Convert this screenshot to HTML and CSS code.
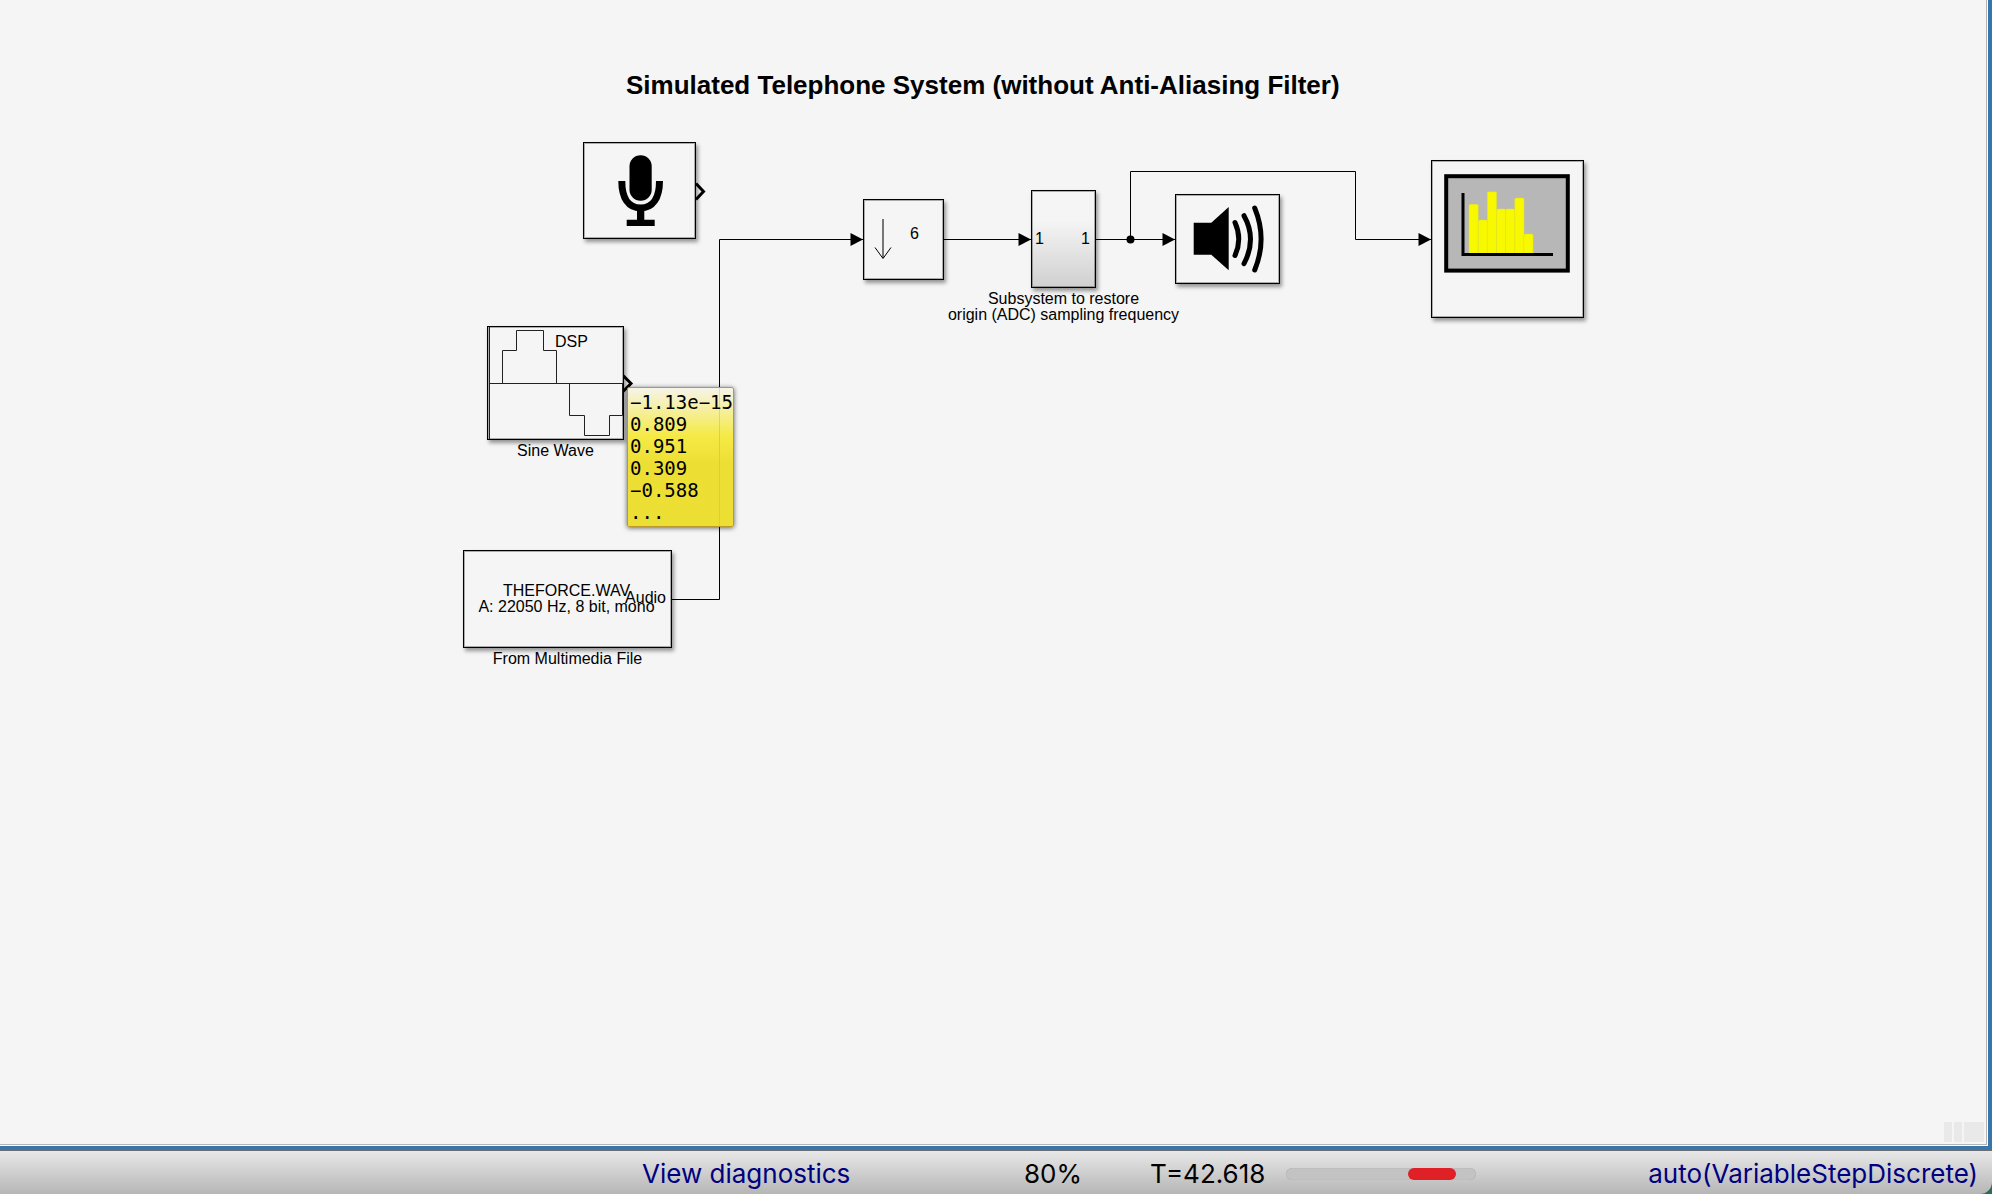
FILE: index.html
```html
<!DOCTYPE html>
<html lang="en">
<head>
<meta charset="utf-8">
<title>Simulated Telephone System</title>
<link rel="stylesheet" href="styles.css">
</head>
<body>
<main class="editor">
  <div class="canvas">
    <h1 class="title">Simulated Telephone System (without Anti-Aliasing Filter)</h1>

    <svg class="wires" width="1600" height="700" aria-hidden="true">
      <g class="wire">
        <path d="M672 599.5H719.5V239.5H864"/>
        <path d="M944 239.5H1032"/>
        <path d="M1096 239.5H1176"/>
        <path d="M1130.500 239V171.500H1355.500V239.500H1432"/>
      </g>
      <g class="arrowhead">
        <path d="M850.500 233V246L863 239.500Z"/>
        <path d="M1018.500 233V246L1031 239.500Z"/>
        <path d="M1162.500 233V246L1175 239.500Z"/>
        <path d="M1418.500 233V246L1431 239.500Z"/>
        <circle cx="1130.500" cy="239.500" r="4"/>
      </g>
      <g class="port">
        <path d="M696 183.500L703.500 191.500L696 199.500"/>
        <path d="M623 375.500L631 383.500L623 391.500"/>
      </g>
    </svg>

    <div class="block mic">
      <svg viewBox="1 1 111 95" role="img" aria-label="Microphone">
        <rect x="46.500" y="13.300" width="22.200" height="45.400" rx="11"/>
        <path class="mic-cradle" d="M38.800 39C38.800 56 45.500 66 57.600 66S76.500 56 76.500 39"/>
        <path d="M54 68h7.300v9.700h10.400V84h-28v-6.300H54z"/>
      </svg>
    </div>

    <div class="block sine">
      <svg class="thin" viewBox="1 1 135 112" aria-hidden="true">
        <path d="M2.500 1V114M2.500 57.500H136"/>
        <path d="M15.500 57.500V24.500H29.500V4.500H56.500V24.500H69.500V57.500H82.500V89.500H97.500V109.500H122.500V89.500H135.500V57.500"/>
      </svg>
      <span class="text dsp">DSP</span>
      <span class="label">Sine Wave</span>
    </div>

    <div class="block file">
      <span class="text file-info">THEFORCE.WAV<br>A: 22050 Hz, 8 bit, mono</span>
      <span class="text audio">Audio</span>
      <span class="label">From Multimedia File</span>
    </div>

    <div class="block downsample">
      <svg class="thin" viewBox="1 1 79 79" aria-hidden="true">
        <path class="stem" d="M20 20V59"/>
        <path class="tip" d="M12 48.500L20 59.500L28 48.500"/>
      </svg>
      <span class="text factor">6</span>
    </div>

    <div class="block subsystem">
      <span class="text in">1</span>
      <span class="text out">1</span>
      <span class="label">Subsystem to restore<br>origin (ADC) sampling frequency</span>
    </div>

    <div class="block speaker">
      <svg viewBox="1 1 103 88" role="img" aria-label="Speaker">
        <path d="M18.700 28.700H36.300L53.700 13V76.300L36.300 60.700H18.700Z"/>
        <path class="sound" d="M60 28.500Q67.500 45 60 61.500M69 21.700Q82 45 69 69.700M79.700 14Q92.500 45 79.700 76"/>
      </svg>
    </div>

    <div class="block scope">
      <svg viewBox="1 1 151 156" role="img" aria-label="Spectrum analyzer">
        <rect class="screen" x="15.200" y="16.200" width="121.600" height="94.400"/>
        <g class="bars">
          <rect x="38" y="44.300" width="9.300" height="49.700" rx="1.500"/>
          <rect x="47.300" y="60" width="9.300" height="34" rx="1.500"/>
          <rect x="56.300" y="31.700" width="9.300" height="62.300" rx="1.500"/>
          <rect x="65.500" y="49" width="9.300" height="45" rx="1.500"/>
          <rect x="74.600" y="49" width="9.300" height="45" rx="1.500"/>
          <rect x="83.700" y="38" width="9.300" height="56" rx="1.500"/>
          <rect x="92.800" y="74" width="9.300" height="20" rx="1.500"/>
        </g>
        <path class="axes" d="M32 33V94.500H122"/>
      </svg>
    </div>

    <output class="value-tip">−1.13e−15<br>0.809<br>0.951<br>0.309<br>−0.588<br>...</output>

    <div class="grip" aria-hidden="true"><i></i><i></i><i class="wide"></i></div>
  </div>
</main>
<footer class="status">
  <a class="diagnostics" href="#diagnostics">View diagnostics</a>
  <span class="zoom">80%</span>
  <span class="time">T=42.618</span>
  <div class="progress" role="progressbar" aria-label="Simulation running"><div class="progress-fill"></div></div>
  <a class="solver" href="#solver">auto(VariableStepDiscrete)</a>
</footer>
</body>
</html>
```
FILE: styles.css
```css
* { box-sizing: border-box; }

body {
  margin: 0;
  min-height: 100vh;
  display: flex;
  flex-direction: column;
  background: #2c6a5c;
  color: #000;
  font-family: "Liberation Sans", Arial, sans-serif;
}

.editor {
  flex: 1;
  display: flex;
  background: #fff;
  border-right: 4px solid #3676ab;
  border-bottom: 4px solid #3676ab;
  padding: 0 1px 1px 0;
}

/* Free canvas: the blocks sit at their diagram coordinates. */
.canvas {
  position: relative;
  flex: 1;
  min-height: 700px;
  background: #f5f5f5;
  border-right: 1px solid #b4b4b4;
  border-bottom: 1px solid #b4b4b4;
}

.title {
  position: absolute;
  left: 626px;
  top: 70px;
  margin: 0;
  font-size: 26px;
  line-height: 30px;
  white-space: nowrap;
}

.wires { position: absolute; left: 0; top: 0; }
.wire { fill: none; stroke: #000; stroke-width: 1; }
.port { fill: none; stroke: #000; stroke-width: 3; }

.block {
  position: absolute;
  background: #f5f5f5;
  border: 1px solid #000;
  box-shadow: inset 0 0 0 1px rgba(0, 0, 0, .3), 2px 3px 4px rgba(0, 0, 0, .4);
  font-size: 16px;
  line-height: 16px;
}
.block svg { display: block; width: 100%; height: 100%; }

.mic { left: 583px; top: 142px; width: 113px; height: 97px; }
.sine { left: 487px; top: 326px; width: 137px; height: 114px; }
.file { left: 463px; top: 550px; width: 209px; height: 98px; }
.downsample { left: 863px; top: 199px; width: 81px; height: 81px; }
.subsystem {
  left: 1031px; top: 190px; width: 65px; height: 98px;
  background: linear-gradient(#f5f5f5 30%, #d0d0d0);
}
.speaker { left: 1175px; top: 194px; width: 105px; height: 90px; }
.scope { left: 1431px; top: 160px; width: 153px; height: 158px; }

.text { position: absolute; white-space: nowrap; }
.label {
  position: absolute;
  top: 100%;
  left: 50%;
  transform: translateX(-50%);
  padding-top: 4px;
  text-align: center;
  white-space: nowrap;
}

.dsp { left: 67px; top: 7px; }
.file-info { left: 0; right: 2px; top: 32px; text-align: center; }
.audio { right: 5px; top: 39px; }
.factor { left: 46px; top: 26px; }
.in { left: 3px; top: 40px; }
.out { right: 5px; top: 40px; }

.mic-cradle { fill: none; stroke: #000; stroke-width: 7; }
.thin { fill: none; stroke: #222; stroke-width: 1; }
.stem { stroke: #777; stroke-width: 2; }
.tip { stroke: #000; }
.sound { fill: none; stroke: #000; stroke-width: 5; stroke-linecap: round; }
.screen { fill: #b7b7b7; stroke: #000; stroke-width: 4; }
.bars { fill: #f8f800; stroke: #dede20; stroke-width: .4; }
.axes { fill: none; stroke: #000; stroke-width: 3; }

.value-tip {
  position: absolute;
  left: 627px;
  top: 387px;
  width: 107px;
  padding: 3px 2px;
  border: 1px solid #b89a30;
  border-radius: 2px;
  background: linear-gradient(rgba(246, 244, 232, .9), rgba(245, 232, 50, .9) 35%, rgba(237, 221, 40, .94) 55%);
  box-shadow: 0 1px 5px rgba(0, 0, 0, .6);
  font: 19px/22px "DejaVu Sans Mono", monospace;
  white-space: nowrap;
}

.grip {
  position: absolute;
  right: 2px;
  bottom: 2px;
  display: flex;
  gap: 2px;
}
.grip i { width: 8px; height: 20px; background: #e9e9e9; }
.grip .wide { width: 20px; }

.status {
  display: grid;
  grid-template-columns: 642fr 382fr 126fr 136fr 190px 516fr;
  align-items: center;
  height: 44px;
  padding-top: 2px;
  border-top: 1px solid #6e6e6e;
  border-bottom-right-radius: 12px;
  background: linear-gradient(#e8e8e8, #b6b6b6);
  font: 26px/32px Inter, sans-serif;
  white-space: nowrap;
}
.status a { color: #000080; text-decoration: none; }
.diagnostics { grid-column: 2; }
.solver { justify-self: end; padding-right: 14px; }

.progress {
  display: flex;
  height: 12px;
  padding-left: 122px;
  border-radius: 6px;
  background: #c3c3c3;
  box-shadow: inset 0 0 1px #999;
}
.progress-fill { width: 48px; border-radius: 6px; background: #df2027; }
```
